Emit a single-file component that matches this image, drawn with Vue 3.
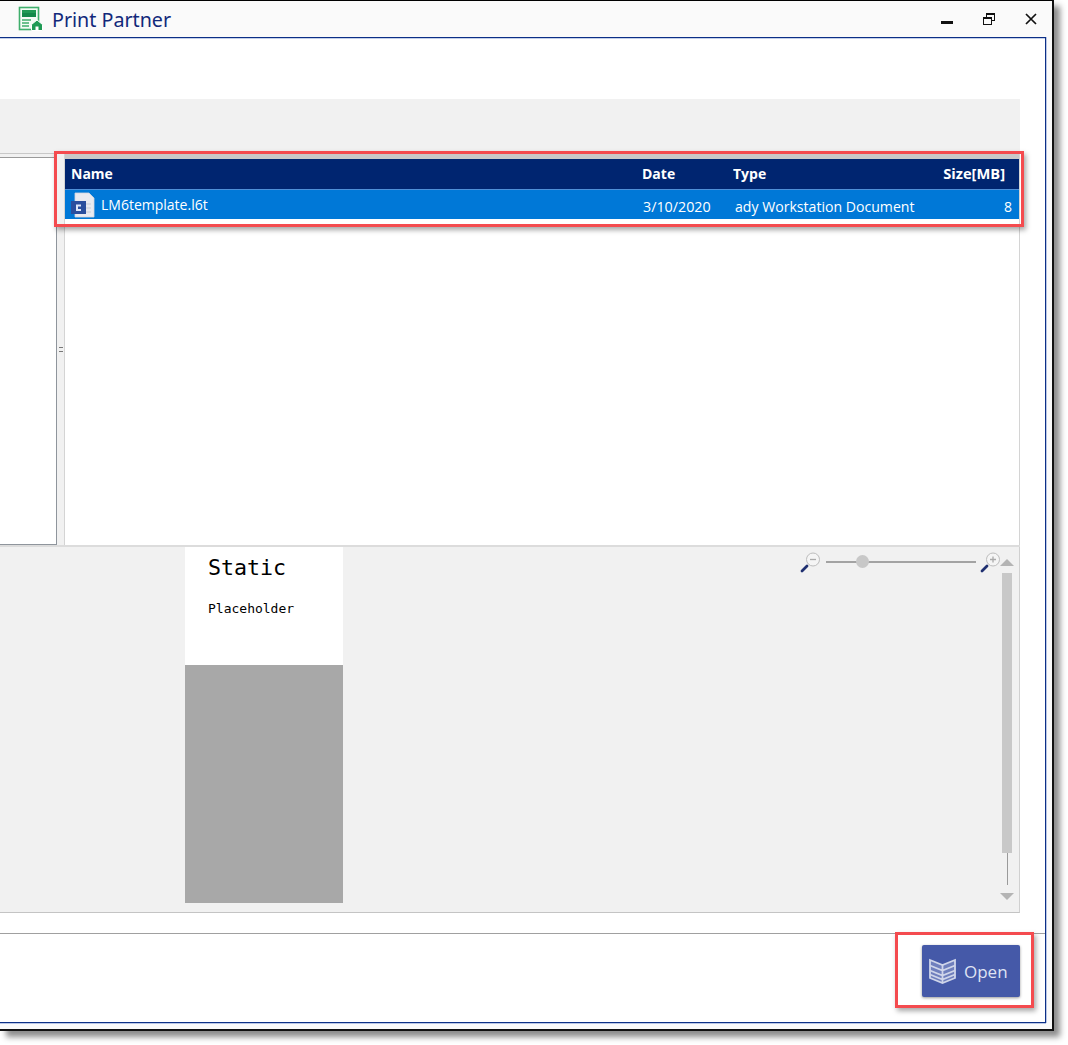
<script setup>
const columns = [
  { key: 'name', label: 'Name' },
  { key: 'date', label: 'Date' },
  { key: 'type', label: 'Type' },
  { key: 'size', label: 'Size[MB]' }
]
</script>

<template>
  <div class="page">
    <div class="window">
      <header class="titlebar">
        <svg class="app-icon" width="26" height="26" viewBox="0 0 26 26">
          <rect x="1.5" y="1.5" width="19" height="22" fill="#f4fbf6" stroke="#3fae6c" stroke-width="1.6" />
          <rect x="4" y="4" width="14" height="3" fill="#1f9a55" />
          <rect x="4" y="7" width="14" height="4" fill="#12894a" />
          <path d="M4 14h9M4 17h7M4 20h7" stroke="#3fae6c" stroke-width="1.5" />
          <path d="M13.5 18.500L19 14l5.500 4.500V24.500h-11z" fill="#1f9a55" stroke="#fff" stroke-width="1" />
          <rect x="17.500" y="20.500" width="3" height="4" fill="#fff" />
        </svg>
        <span class="app-title">Print Partner</span>
        <div class="window-controls">
          <svg width="14" height="14" viewBox="0 0 14 14"><rect x="1" y="9" width="12" height="3" fill="#111" /></svg>
          <svg width="14" height="14" viewBox="0 0 14 14" fill="none" stroke="#111">
            <rect x="4.500" y="1.500" width="8" height="7" stroke-width="1" />
            <rect x="4" y="1" width="9" height="2" fill="#111" stroke="none" />
            <rect x="1.500" y="5.500" width="8" height="7" fill="#fafafa" stroke-width="1" />
            <rect x="1" y="5" width="9" height="2" fill="#111" stroke="none" />
          </svg>
          <svg width="14" height="14" viewBox="0 0 14 14"><path d="M2 2l10 10M12 2L2 12" stroke="#111" stroke-width="1.7" /></svg>
        </div>
      </header>

      <main class="frame">
        <div class="top-space"></div>
        <div class="band"></div>

        <section class="panes">
          <div class="left-pane"><div class="left-strip"></div></div>
          <div class="splitter"><span class="grip"></span></div>
          <div class="right-pane">
            <div class="table-top"></div>
            <div class="thead">
              <span v-for="c in columns" :key="c.key" :class="['cell', c.key]">{{ c.label }}</span>
            </div>
            <div class="row">
              <span class="cell name">
                <svg class="file-icon" width="24" height="26" viewBox="0 0 24 26">
                  <path d="M4 1h14l5 5v19H4z" fill="#e9eaf0" stroke="#d3d6de" stroke-width="0.8" />
                  <rect x="0" y="9" width="15" height="13" fill="#2b4f9e" />
                  <path d="M5 12.500h5v2H7v2.500h3v2H5z" fill="#dfe7f8" />
                  <path d="M15 12h5M15 16h5M15 20h5" stroke="#c7ccd8" stroke-width="1" />
                </svg>
                LM6template.l6t
              </span>
              <span class="cell date">3/10/2020</span>
              <span class="cell type">ady Workstation Document</span>
              <span class="cell size">8</span>
            </div>
          </div>
        </section>

        <section class="preview">
          <div class="paper">
            <div class="paper-white">
              <div class="static">Static</div>
              <div class="placeholder">Placeholder</div>
            </div>
            <div class="paper-grey"></div>
          </div>

          <div class="zoom-bar">
            <svg width="22" height="24" viewBox="0 0 22 24">
              <path d="M2 21l5-5" stroke="#1f2f70" stroke-width="2.800" stroke-linecap="round" />
              <circle cx="13" cy="9.500" r="6.500" fill="#f5f5f5" stroke="#bdbdbd" />
              <path d="M10 9.500h6" stroke="#aaa" stroke-width="1.300" />
            </svg>
            <div class="zoom-track"><span class="zoom-thumb"></span></div>
            <svg width="22" height="24" viewBox="0 0 22 24">
              <path d="M2 21l5-5" stroke="#1f2f70" stroke-width="2.800" stroke-linecap="round" />
              <circle cx="13" cy="9.500" r="6.500" fill="#f5f5f5" stroke="#bdbdbd" />
              <path d="M10 9.500h6M13 6.500v6" stroke="#aaa" stroke-width="1.300" />
            </svg>
          </div>

          <div class="scrollbar">
            <span class="arrow up"></span>
            <span class="scroll-thumb"></span>
            <span class="scroll-line"></span>
            <span class="arrow down"></span>
          </div>
        </section>

        <footer class="footer">
          <button class="open-btn" type="button">
            <svg width="27" height="26" viewBox="0 0 27 26" fill="none" stroke="#cfd5ea" stroke-width="1.800">
              <path d="M1 2l12.500 5L26 2v18l-12.500 5L1 20z" fill="#6f7fbd" />
              <path d="M13.500 7v18M1 7.500l12.500 5 12.500-5M1 12.500l12.500 5 12.500-5M1 16.500l12.500 5 12.500-5" />
            </svg>
            <span>Open</span>
          </button>
        </footer>
      </main>
    </div>

    <div class="callout callout-table"></div>
    <div class="callout callout-open"></div>
  </div>
</template>

<style>
html, body { margin: 0; background: #fff; overflow: hidden; }
</style>

<style scoped>
.page {
  position: relative;
  width: 1068px;
  height: 1045px;
  background: #fff;
  font-family: "Open Sans", "Noto Sans", sans-serif;
  overflow: hidden;
}
.window {
  position: relative;
  box-sizing: border-box;
  width: 1054px;
  height: 1031px;
  display: flex;
  flex-direction: column;
  padding-right: 6px;
  padding-bottom: 6px;
  background: #fafafa;
  border-top: 1px solid #000;
  border-right: 2px solid #111;
  border-bottom: 2px solid #111;
  box-shadow: 6px 6px 6px rgba(0, 0, 0, 0.45);
}
.titlebar {
  flex: none;
  height: 36px;
  display: flex;
  align-items: center;
  padding-left: 18px;
}
.app-icon { flex: none; }
.app-title {
  margin-left: 8px;
  font-family: "Noto Sans", "Open Sans", sans-serif;
  font-size: 19.700px;
  color: #12297a;
}
.window-controls {
  margin-left: auto;
  display: flex;
  align-items: center;
  gap: 28px;
  padding-right: 8px;
}
.frame {
  flex: 1;
  min-height: 0;
  display: flex;
  flex-direction: column;
  background: #fff;
  border-top: 1px solid #0c2f86;
  border-right: 1px solid #0c2f86;
  border-bottom: 1px solid #0c2f86;
  box-shadow: inset 0 1px 0 #c3cfe8, 0 1px 0 #b9c6e4, 1px 0 0 #b9c6e4;
}
.top-space { flex: none; height: 61px; }
.band {
  flex: none;
  height: 54px;
  margin-right: 25px;
  background: #f1f1f1;
}
.panes {
  flex: none;
  height: 394px;
  margin-right: 25px;
  display: flex;
  background: #f1f1f1;
  border-bottom: 2px solid #dcdcdc;
  box-sizing: border-box;
}
.left-pane {
  flex: none;
  width: 57px;
  box-sizing: border-box;
  background: #fff;
  border-right: 1px solid #8f959c;
  border-bottom: 1px solid #8f959c;
}
.left-strip {
  height: 5px;
  box-sizing: border-box;
  background: #f1f1f1;
  border-top: 1px solid #c8c8c8;
  border-bottom: 1px solid #9a9a9a;
}
.splitter {
  flex: none;
  width: 7px;
  display: flex;
  align-items: center;
  justify-content: center;
  background: #f1f1f1;
}
.grip { width: 4px; height: 5px; border-top: 1px solid #777; border-bottom: 1px solid #777; box-sizing: border-box; }
.right-pane {
  flex: 1;
  min-width: 0;
  background: #fff;
  border-right: 1px solid #d4d4d4;
  border-left: 1px solid #d4d4d4;
  box-sizing: border-box;
}
.table-top { height: 6px; background: #c9c9c9; }
.thead, .row {
  display: grid;
  grid-template-columns: 577px 91px 210px 76px;
  align-items: center;
  color: #fff;
  font-size: 14px;
}
.thead {
  height: 31px;
  padding-bottom: 2px;
  background: #002570;
  font-weight: 700;
  border-bottom: 1px solid #4f90d8;
  box-sizing: border-box;
}
.row { height: 29px; background: #0078d7; }
.cell { white-space: nowrap; overflow: hidden; }
.cell.name { padding-left: 6px; display: flex; align-items: center; gap: 6px; }
.cell.size { text-align: right; }
.thead .cell.size { padding-right: 14px; font-size: 14.700px; }
.row .cell.name { padding-left: 7px; overflow: visible; }
.row .cell.date { padding-left: 1px; padding-top: 3px; font-size: 14.300px; }
.row .cell.type { padding-left: 2px; padding-top: 3px; font-size: 14.100px; }
.row .cell.size { padding-right: 7px; padding-top: 3px; }
.file-icon { flex: none; margin-left: -1px; }
.preview {
  position: relative;
  flex: none;
  height: 366px;
  margin-right: 25px;
  background: #f1f1f1;
  border-right: 1px solid #d0d0d0;
  border-bottom: 1px solid #c4c4c4;
  box-sizing: border-box;
  padding-left: 185px;
}
.paper { width: 158px; height: 356px; display: flex; flex-direction: column; }
.paper-white {
  flex: none;
  height: 118px;
  box-sizing: border-box;
  background: #fff;
  padding: 8px 0 0 23px;
  color: #000;
  font-family: "DejaVu Sans Mono", "Liberation Mono", monospace;
}
.static { font-size: 21.600px; line-height: 26px; }
.placeholder { margin-top: 20px; font-size: 13px; line-height: 16px; }
.paper-grey { flex: 1; background: #a8a8a8; }
.zoom-bar {
  position: absolute;
  top: 3px;
  right: 17px;
  display: flex;
  align-items: center;
  gap: 4px;
}
.zoom-track { position: relative; width: 150px; height: 2px; background: #a3a3a3; }
.zoom-thumb {
  position: absolute;
  left: 30px;
  top: -6px;
  width: 13px;
  height: 13px;
  border-radius: 50%;
  background: #c8c8c8;
}
.scrollbar {
  position: absolute;
  top: 12px;
  right: 4px;
  bottom: 12px;
  width: 16px;
  display: flex;
  flex-direction: column;
  align-items: center;
}
.arrow { width: 0; height: 0; border-left: 7px solid transparent; border-right: 7px solid transparent; }
.arrow.up { border-bottom: 7px solid #b4b4b4; }
.arrow.down { border-top: 7px solid #b4b4b4; margin-top: auto; }
.scroll-thumb { margin-top: 7px; width: 10px; height: 280px; background: #c8c8c8; }
.scroll-line { width: 1px; height: 32px; background: #9a9a9a; }
.footer {
  flex: 1;
  margin-top: 20px;
  border-top: 1px solid #a0a0a0;
  display: flex;
  justify-content: flex-end;
  align-items: flex-start;
  padding: 11px 25px 0 0;
}
.open-btn {
  width: 98px;
  height: 52px;
  display: flex;
  align-items: center;
  gap: 8px;
  padding: 0 0 0 7px;
  border: 0;
  border-radius: 2px;
  background: #4559a8;
  color: #dfe3f3;
  font-family: "Open Sans", sans-serif;
  font-size: 17px;
  box-shadow: 0 1px 3px rgba(0, 0, 0, 0.4);
}
.callout {
  position: absolute;
  box-sizing: border-box;
  border: 3px solid #f44b4f;
  box-shadow: 2px 3px 5px rgba(0, 0, 0, 0.35);
}
.callout-table { left: 54px; top: 151px; width: 970px; height: 76px; }
.callout-open { left: 895px; top: 932px; width: 139px; height: 76px; }
</style>
